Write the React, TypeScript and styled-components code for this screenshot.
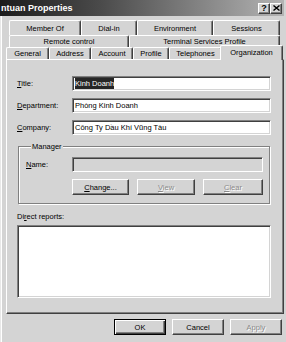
import React from "react";
import styled, { createGlobalStyle } from "styled-components";

const FACE = "#d4d4d4";

const Global = createGlobalStyle`
  html, body { margin: 0; padding: 0; background: ${FACE}; }
  body {
    font-family: "Liberation Sans", Arial, sans-serif;
    font-size: 7.5px;
    color: #000;
  }
  u { text-decoration: underline; text-underline-offset: 1px; }
`;

const Window = styled.div`
  width: 286px;
  height: 342px;
  box-sizing: border-box;
  padding-right: 2px;
  background: ${FACE};
  display: flex;
  flex-direction: column;
  box-shadow: inset 1px 0 0 #e8e8e8, inset 2px 0 0 #fff;
`;

const TitleBar = styled.div`
  height: 16px;
  display: flex;
  align-items: center;
  padding: 0 2px 0 1px;
  background: linear-gradient(to right, #1c1c1c 0%, #4a4a4a 35%, #b4b4b4 100%);
`;

const TitleText = styled.span`
  flex: 1;
  color: #fff;
  font-weight: bold;
  font-size: 9px;
  line-height: 16px;
  white-space: nowrap;
`;

const CaptionButton = styled.div`
  width: 12px;
  height: 11px;
  box-sizing: border-box;
  background: ${FACE};
  display: flex;
  align-items: center;
  justify-content: center;
  font-weight: bold;
  font-size: 9px;
  line-height: 9px;
  border-top: 1px solid #fff;
  border-left: 1px solid #fff;
  border-right: 1px solid #404040;
  border-bottom: 1px solid #404040;
  box-shadow: inset -1px -1px 0 #808080;
`;

const Body = styled.div`
  flex: 1;
  display: flex;
  flex-direction: column;
  padding: 4px 0 7px 6px;
  min-height: 0;
`;

const TabRow = styled.div<{ $left: number; $right: number; $h: number }>`
  display: flex;
  height: ${(p) => p.$h}px;
  margin-left: ${(p) => p.$left}px;
  margin-right: ${(p) => p.$right}px;
`;

const Tab = styled.div<{ $w: number }>`
  width: ${(p) => p.$w}px;
  flex: none;
  box-sizing: border-box;
  display: flex;
  align-items: center;
  justify-content: center;
  white-space: nowrap;
  border-top: 1px solid #fff;
  border-left: 1px solid #fff;
  border-right: 1px solid #404040;
  border-radius: 2px 2px 0 0;
  box-shadow: inset -1px 0 0 #808080;
`;

const ActiveTab = styled(Tab)`
  position: relative;
  z-index: 1;
  height: 15px;
  margin: -2px -1px -1px -2px;
  padding-bottom: 1px;
  background: ${FACE};
`;

const Panel = styled.div`
  flex: 1;
  display: flex;
  flex-direction: column;
  box-sizing: border-box;
  padding: 16px 12px 15px 10px;
  border-top: 1px solid #fff;
  border-left: 1px solid #fff;
  border-right: 1px solid #404040;
  border-bottom: 1px solid #404040;
  box-shadow: inset -1px -1px 0 #808080;
`;

const Fields = styled.div`
  display: grid;
  grid-template-columns: 55px 1fr;
  row-gap: 7px;
  align-items: center;
`;

const Label = styled.span<{ $disabled?: boolean }>`
  white-space: nowrap;
  line-height: 9px;
  color: ${(p) => (p.$disabled ? "#808080" : "#000")};
`;

const Edit = styled.div<{ $disabled?: boolean }>`
  height: 15px;
  box-sizing: border-box;
  display: flex;
  align-items: center;
  padding-left: 2px;
  white-space: nowrap;
  overflow: hidden;
  background: ${(p) => (p.$disabled ? FACE : "#fff")};
  border-top: 1px solid #808080;
  border-left: 1px solid #808080;
  border-bottom: 1px solid #fff;
  border-right: 1px solid #fff;
  box-shadow: inset 1px 1px 0 #404040, inset -1px -1px 0 ${FACE};
`;

const Selected = styled.span`
  background: #262626;
  color: #fff;
  padding: 1px 0;
`;

const GroupBox = styled.div`
  margin: 11px 1px 0 1px;
  padding: 0 6px 8px 7px;
  border: 1px solid #808080;
  box-shadow: 1px 1px 0 #fff, inset 1px 1px 0 #fff;
  display: flex;
  flex-direction: column;
`;

const Legend = styled.span`
  align-self: flex-start;
  margin: -5px 0 0 5px;
  padding: 0 1px;
  line-height: 9px;
  background: ${FACE};
`;

const NameRow = styled.div`
  display: grid;
  grid-template-columns: 46px 1fr;
  align-items: center;
  margin-top: 6px;
`;

const GroupButtons = styled.div`
  display: flex;
  gap: 8px;
  margin: 7px 0 0 46px;
`;

const Button = styled.div<{ $w: number; $default?: boolean; $disabled?: boolean }>`
  width: ${(p) => p.$w}px;
  height: 16px;
  box-sizing: border-box;
  display: flex;
  align-items: center;
  justify-content: center;
  background: ${FACE};
  color: ${(p) => (p.$disabled ? "#8a8a8a" : "#000")};
  text-shadow: ${(p) => (p.$disabled ? "1px 1px 0 #fff" : "none")};
  border-top: 1px solid ${(p) => (p.$default ? "#000" : "#fff")};
  border-left: 1px solid ${(p) => (p.$default ? "#000" : "#fff")};
  border-right: 1px solid ${(p) => (p.$default ? "#000" : "#404040")};
  border-bottom: 1px solid ${(p) => (p.$default ? "#000" : "#404040")};
  box-shadow: ${(p) =>
    p.$default
      ? "inset 1px 1px 0 #fff, inset -1px -1px 0 #404040, inset -2px -2px 0 #808080"
      : "inset -1px -1px 0 #808080"};
`;

const ReportsLabel = styled(Label)`
  margin: 8px 0 4px;
`;

const ListBox = styled.div`
  flex: 1;
  background: #fff;
  border-top: 1px solid #808080;
  border-left: 1px solid #808080;
  border-bottom: 1px solid #fff;
  border-right: 1px solid #fff;
  box-shadow: inset 1px 1px 0 #404040, inset -1px -1px 0 ${FACE};
`;

const DialogButtons = styled.div`
  display: flex;
  justify-content: flex-end;
  gap: 6px;
  margin-top: 5px;
  padding-right: 2px;
`;

const rowOne = [
  { label: "Member Of", w: 72 },
  { label: "Dial-in", w: 56 },
  { label: "Environment", w: 76 },
  { label: "Sessions", w: 67 },
];
const rowTwo = [
  { label: "Remote control", w: 120 },
  { label: "Terminal Services Profile", w: 151 },
];
const rowThree = [
  { label: "General", w: 43 },
  { label: "Address", w: 42 },
  { label: "Account", w: 42 },
  { label: "Profile", w: 36 },
  { label: "Telephones", w: 53 },
];

const CloseGlyph = () => (
  <svg width="7" height="6" viewBox="0 0 7 6">
    <path d="M0.5 0.5 L6.5 5.5 M6.5 0.5 L0.5 5.5" stroke="#000" strokeWidth="1.4" />
  </svg>
);

export default function App() {
  return (
    <Window>
      <Global />
      <TitleBar>
        <TitleText>ntuan Properties</TitleText>
        <CaptionButton>?</CaptionButton>
        <CaptionButton style={{ marginLeft: 0 }}>
          <CloseGlyph />
        </CaptionButton>
      </TitleBar>
      <Body>
        <TabRow $left={3} $right={4} $h={15}>
          {rowOne.map((t) => (
            <Tab key={t.label} $w={t.w}>{t.label}</Tab>
          ))}
        </TabRow>
        <TabRow $left={3} $right={4} $h={12}>
          {rowTwo.map((t) => (
            <Tab key={t.label} $w={t.w}>{t.label}</Tab>
          ))}
        </TabRow>
        <TabRow $left={0} $right={0} $h={12}>
          {rowThree.map((t) => (
            <Tab key={t.label} $w={t.w}>{t.label}</Tab>
          ))}
          <ActiveTab $w={63}>Organization</ActiveTab>
        </TabRow>
        <Panel>
          <Fields>
            <Label><u>T</u>itle:</Label>
            <Edit><Selected>Kinh Doanh</Selected></Edit>
            <Label><u>D</u>epartment:</Label>
            <Edit>Phòng Kinh Doanh</Edit>
            <Label><u>C</u>ompany:</Label>
            <Edit>Công Ty Dầu Khí Vũng Tàu</Edit>
          </Fields>
          <GroupBox>
            <Legend>Manager</Legend>
            <NameRow>
              <Label><u>N</u>ame:</Label>
              <Edit $disabled />
            </NameRow>
            <GroupButtons>
              <Button $w={57}><span><u>C</u>hange...</span></Button>
              <Button $w={58} $disabled><span><u>V</u>iew</span></Button>
              <Button $w={60} $disabled><span><u>C</u>lear</span></Button>
            </GroupButtons>
          </GroupBox>
          <ReportsLabel>Di<u>r</u>ect reports:</ReportsLabel>
          <ListBox />
        </Panel>
        <DialogButtons>
          <Button $w={52} $default>OK</Button>
          <Button $w={52}>Cancel</Button>
          <Button $w={52} $disabled>Apply</Button>
        </DialogButtons>
      </Body>
    </Window>
  );
}
